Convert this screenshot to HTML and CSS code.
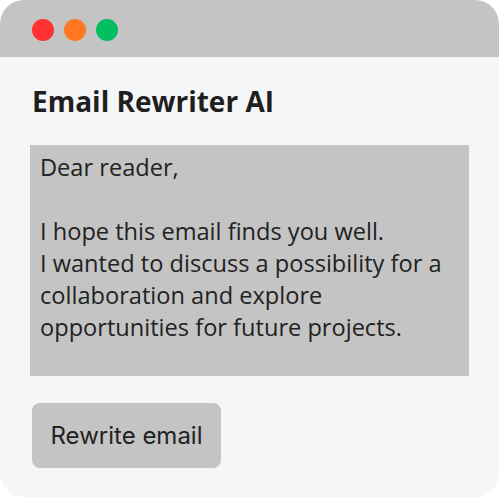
FILE: index.html
```html
<!DOCTYPE html>
<html>
<head>
<meta charset="utf-8">
<link rel="stylesheet" href="styles.css">
</head>
<body>
<div class="window">
  <div class="titlebar">
    <span class="dot red"></span>
    <span class="dot orange"></span>
    <span class="dot green"></span>
  </div>
  <div class="content">
    <h1 class="title">Email Rewriter AI</h1>
    <div class="email">Dear reader,<br><br>I hope this email finds you well.<br>I wanted to discuss a possibility for a collaboration and explore opportunities for future projects.</div>
    <button class="btn">Rewrite email</button>
  </div>
</div>
</body>
</html>
```
FILE: styles.css
```css
html, body {
  margin: 0;
  padding: 0;
  background: #ffffff;
}
.window {
  width: 499px;
  height: 497px;
  border-radius: 24px;
  overflow: hidden;
  background: #f5f6f8;
  display: flex;
  flex-direction: column;
}
.titlebar {
  height: 57px;
  flex: none;
  background: #c4c4c4;
  display: flex;
  align-items: center;
  gap: 10px;
  padding-left: 32px;
  padding-top: 2px;
  box-sizing: border-box;
}
.dot {
  width: 22px;
  height: 22px;
  border-radius: 50%;
}
.red { background: #ff3131; }
.orange { background: #ff7720; }
.green { background: #03bf62; }
.content {
  padding: 28px 29px 0 30px;
  display: flex;
  flex-direction: column;
  align-items: flex-start;
}
.title {
  margin: 0 0 28px 2px;
  font-family: "Open Sans", sans-serif;
  font-weight: 700;
  font-size: 28px;
  line-height: 32px;
  color: #1f1f1f;
}
.email {
  box-sizing: border-box;
  width: 439px;
  height: 231px;
  background: #c4c4c4;
  padding: 6px 10px 0 10px;
  font-family: "Open Sans", sans-serif;
  font-size: 23.6px;
  line-height: 32px;
  color: #222222;
}
.btn {
  margin: 27px 0 0 2px;
  width: 189px;
  height: 65px;
  border: none;
  border-radius: 8px;
  background: #c4c4c4;
  font-family: "Inter", sans-serif;
  font-size: 24px;
  color: #222222;
  padding: 0;
}
```
